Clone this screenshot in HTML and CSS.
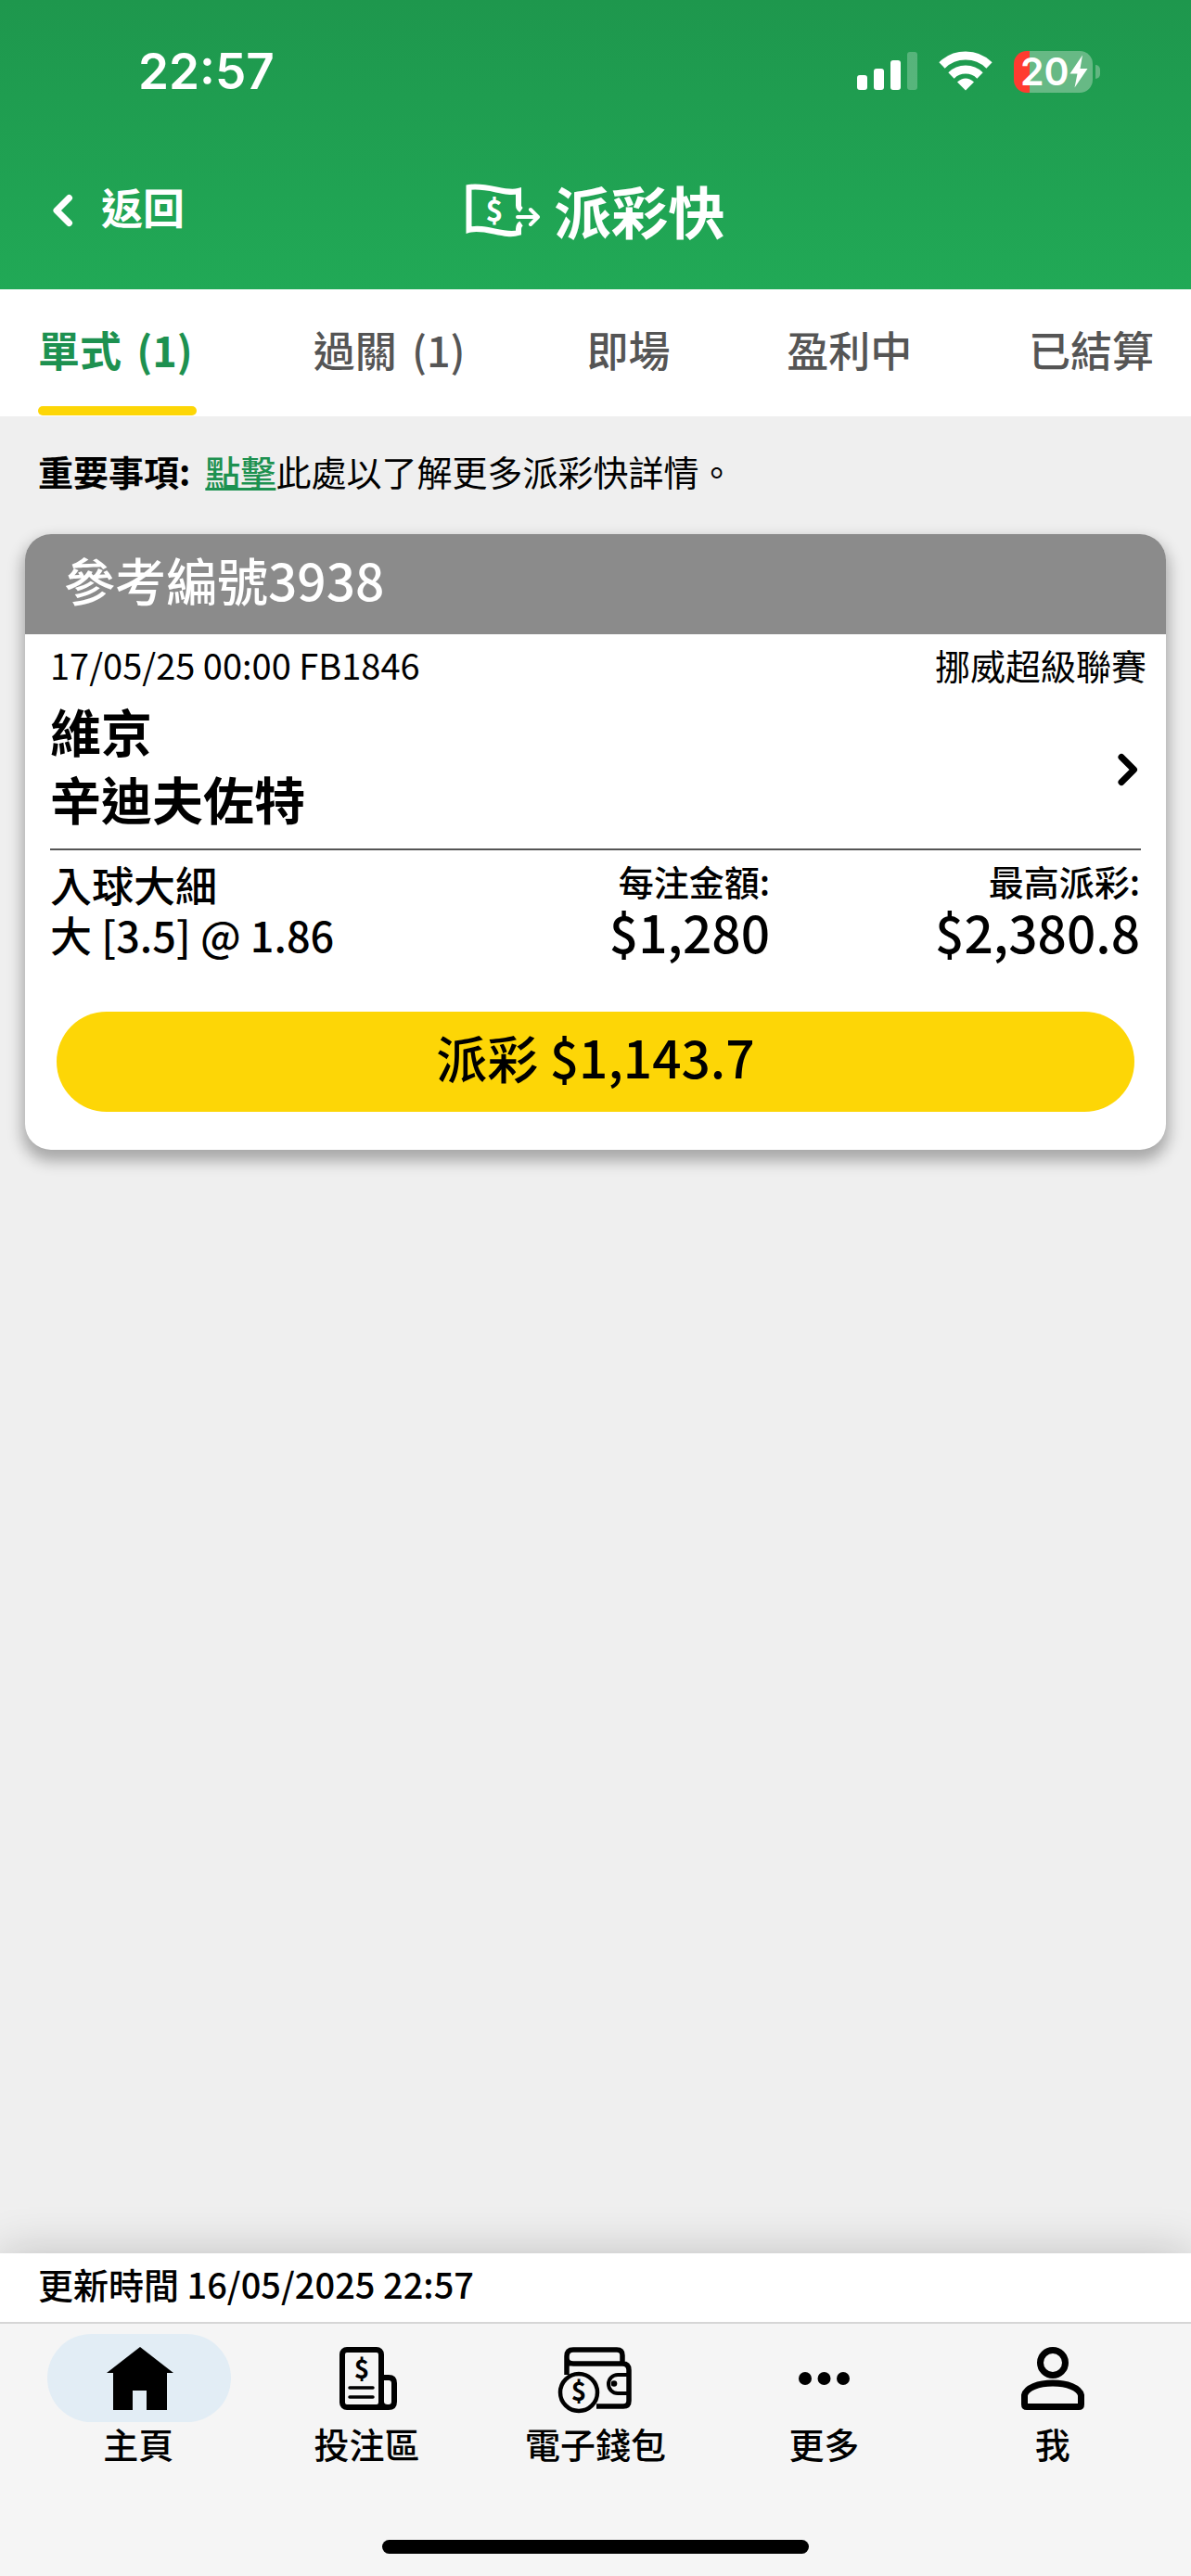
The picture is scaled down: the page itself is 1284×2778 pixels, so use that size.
FILE: index.html
```html
<!DOCTYPE html>
<html lang="zh-Hant-HK">
<head>
  <meta charset="UTF-8" />
  <meta name="viewport" content="width=device-width, initial-scale=1.0"/>
  <title>派彩快</title>
  <link rel="stylesheet" href="styles.css">
</head>
<body>
  <header class="header">
    <div class="status-bar">
      <span class="clock">22:57</span>
      <div class="status-icons">
        <svg class="signal" width="66" height="44" viewBox="0 0 66 44" fill="#fff">
          <rect x="0" y="26" width="11" height="16" rx="3"/>
          <rect x="18" y="19" width="11" height="23" rx="3"/>
          <rect x="36" y="10" width="11" height="32" rx="3"/>
          <rect x="54" y="1" width="11" height="41" rx="3" opacity="0.25"/>
        </svg>
        <svg class="wifi" width="58" height="44" viewBox="0 0 58 44" fill="none" stroke="#fff">
          <path d="M3.5 15.5a36.5 36.5 0 0 1 51 0" stroke-width="9"/>
          <path d="M13.5 26.500a22 22 0 0 1 31 0" stroke-width="9"/>
          <path d="M20 33.500q9-8 18 0L29 42.500z" fill="#fff" stroke="none"/>
        </svg>
        <div class="battery">
          <span class="battery-text">20</span>
          <svg width="20" height="36" viewBox="0 0 20 30" preserveAspectRatio="none" fill="#fff"><path d="M14 0.500L0.500 17h8L5.500 29.500 19.500 12.500h-8z"/></svg>
        </div>
        <div class="battery-cap"></div>
      </div>
    </div>
    <div class="nav-bar">
      <a class="back">
        <svg width="24" height="36" viewBox="0 0 24 36" fill="none" stroke="#fff" stroke-width="7" stroke-linecap="round" stroke-linejoin="round"><path d="M18.500 4.500L5 18l13.500 13.500"/></svg>
        <span>返回</span>
      </a>
      <h1 class="title">
        <svg width="80" height="58" viewBox="0 0 80 58" fill="none" stroke="#fff">
          <path d="M60 28.500q-3-2-3-5V8C42 12 25 1 3.500 4v46C20 45 42 58 57 53v-4q0-4 3-6" stroke-width="6"/>
          <path d="M56 36h21M70 28l8 8-8 8" stroke-width="4" stroke-linecap="round" stroke-linejoin="round"/>
          <text class="svg-dollar" x="31" y="41" font-size="32" fill="#fff" stroke="none">$</text>
        </svg>
        <span>派彩快</span>
      </h1>
    </div>
  </header>

  <nav class="tabs">
    <a class="tab count active">單式 (1)</a>
    <a class="tab count">過關 (1)</a>
    <a class="tab">即場</a>
    <a class="tab">盈利中</a>
    <a class="tab">已結算</a>
  </nav>

  <main class="content">
    <p class="notice"><b>重要事項:</b><span><a class="link">點擊</a>此處以了解更多派彩快詳情。</span></p>

    <section class="card">
      <div class="card-head">參考編號3938</div>
      <div class="card-body">
        <div class="match-info">
          <span>17/05/25 00:00 FB1846</span>
          <span class="league">挪威超級聯賽</span>
        </div>
        <div class="match">
          <div class="teams">
            <div>維京</div>
            <div>辛迪夫佐特</div>
          </div>
          <svg class="arrow" width="24" height="36" viewBox="0 0 24 36" fill="none" stroke="#000" stroke-width="7" stroke-linecap="round" stroke-linejoin="round"><path d="M5 4.500L18.500 18 5 31.500"/></svg>
        </div>
        <div class="bet">
          <div class="selection">
            <div>入球大細</div>
            <div>大 [3.5] @ 1.86</div>
          </div>
          <div class="amount">
            <div class="label">每注金額:</div>
            <div class="value">$1,280</div>
          </div>
          <div class="amount">
            <div class="label">最高派彩:</div>
            <div class="value">$2,380.8</div>
          </div>
        </div>
        <button class="cashout">派彩 $1,143.7</button>
      </div>
    </section>
  </main>

  <footer class="footer">
    <div class="updated">更新時間 16/05/2025 22:57</div>
    <nav class="bottom-nav">
      <a class="nav-item">
        <svg class="icon" viewBox="0 0 200 95">
          <rect x="2" y="0" width="198" height="95" rx="47.500" fill="#e2edf5"/>
          <path d="M102 14l36 28h-7v40h-22V61H94v21H73V42h-7z"/>
        </svg>
        <span>主頁</span>
      </a>
      <a class="nav-item">
        <svg class="icon" viewBox="0 0 200 95" fill="none" stroke="#000" stroke-width="6">
          <rect x="73" y="17" width="42" height="62" rx="5"/>
          <path d="M115 47h8q6 0 6 6v20q0 6-6 6h-14M115 47v26q0 6 7 6"/>
          <path d="M81 58h25M81 68h25" stroke-width="3.500" stroke-linecap="round"/>
          <text class="svg-dollar" x="94" y="48" font-size="28" fill="#000" stroke="none">$</text>
        </svg>
        <span>投注區</span>
      </a>
      <a class="nav-item">
        <svg class="icon" viewBox="0 0 200 95" fill="none" stroke="#000">
          <path d="M69 44V24q0-7 7-7h47q6 0 6 6v10M69 26q0 6 7 6h53q7 0 7 7v33q0 6-6 6h-29" stroke-width="5.500"/>
          <path d="M135 44h-11a10 10 0 0 0 0 20h11" stroke-width="4"/>
          <circle cx="120" cy="53.500" r="3.300" fill="#000" stroke="none"/>
          <circle cx="82" cy="63" r="20" stroke-width="4.500"/>
          <text class="svg-dollar" x="82" y="72" font-size="28" fill="#000" stroke="none">$</text>
        </svg>
        <span>電子錢包</span>
      </a>
      <a class="nav-item">
        <svg class="icon" viewBox="0 0 200 95"><circle cx="80" cy="48" r="7"/><circle cx="100.500" cy="48" r="7"/><circle cx="121" cy="48" r="7"/></svg>
        <span>更多</span>
      </a>
      <a class="nav-item">
        <svg class="icon" viewBox="0 0 200 95" fill="none" stroke="#000" stroke-width="7">
          <circle cx="100" cy="31" r="13.500"/>
          <path d="M69.500 66c2-8 15-13 30.500-13s28.500 5 30.500 13v10q0 2.500-2.500 2.500H72q-2.500 0-2.500-2.500z"/>
        </svg>
        <span>我</span>
      </a>
    </nav>
    <div class="home-indicator"></div>
  </footer>
</body>
</html>
```

FILE: styles.css
```css
* {
  box-sizing: border-box;
}

body {
  margin: 0;
  min-height: 2778px;
  display: flex;
  flex-direction: column;
  background-color: #efefef;
  color: #000;
  font-family: "Noto Sans CJK TC", "Noto Sans", sans-serif;
  font-size: 38px;
}

.header {
  height: 312px;
  background: linear-gradient(#1e974d, #21a956);
  color: #fff;
}

.status-bar {
  height: 154px;
  padding: 0 98px 0 149px;
  display: flex;
  justify-content: space-between;
  align-items: center;
}

.clock {
  font-family: Inter, sans-serif;
  font-size: 53px;
  font-weight: 600;
}

.status-icons {
  display: flex;
  align-items: center;
}

.wifi {
  margin: 0 23px 0 22px;
}

.battery {
  width: 85px;
  height: 45px;
  padding-left: 7px;
  display: flex;
  align-items: center;
  border-radius: 14px;
  background: linear-gradient(90deg, #ff3b30 17px, #67b985 17px);
}

.battery-text {
  width: 53px;
  font-family: Inter, sans-serif;
  font-size: 41px;
  font-weight: 600;
  line-height: 45px;
}

.battery-cap {
  width: 5px;
  height: 15px;
  margin-left: 3px;
  border-radius: 0 5px 5px 0;
  background-color: #62b681;
}

.nav-bar {
  height: 158px;
  padding: 0 56px 12px;
  display: grid;
  grid-template-columns: 1fr auto 1fr;
  align-items: center;
}

.back {
  display: flex;
  align-items: center;
  gap: 29px;
  font-size: 45px;
  font-weight: 700;
  line-height: 60px;
}

.back span {
  margin-top: -8px;
}

.title {
  margin: 0;
  display: flex;
  align-items: center;
  gap: 15px;
  font-size: 61.5px;
  line-height: 80px;
}

.svg-dollar {
  font-weight: 700;
  text-anchor: middle;
}

.tabs {
  height: 137px;
  padding: 32px 40px 0 41px;
  display: flex;
  justify-content: space-between;
  background-color: #fff;
  color: #555;
  font-size: 45px;
  font-weight: 500;
  line-height: 65px;
}

.tab.count {
  padding-right: 5px;
  word-spacing: 6px;
}

.tab.active {
  padding-right: 0;
  color: #1d9150;
  font-weight: 700;
}

.tab.active::after {
  content: "";
  display: block;
  width: 171px;
  height: 10px;
  margin-top: 29px;
  border-radius: 5px;
  background-color: #fdd606;
}

.content {
  flex: 1;
  padding: 31px 27px 0;
}

.notice {
  margin: 0 0 40px;
  padding-left: 14px;
  display: flex;
  gap: 16px;
  line-height: 56px;
}

.link {
  color: #1d9150;
  font-weight: 500;
  text-decoration: underline;
}

.card {
  border-radius: 28px;
  background-color: #fff;
  box-shadow: 0 9px 16px 3px rgba(0, 0, 0, 0.3);
}

.card-head {
  height: 108px;
  padding-left: 42px;
  border-radius: 28px 28px 0 0;
  background-color: #8b8b8b;
  color: #fff;
  font-size: 55px;
  font-weight: 500;
  line-height: 96px;
}

.card-body {
  padding: 5px 27px 41px;
}

.match-info {
  display: flex;
  justify-content: space-between;
  line-height: 56px;
}

.league {
  margin-right: -6px;
}

.match {
  padding: 6px 2px 18px 0;
  display: flex;
  justify-content: space-between;
  align-items: center;
  border-bottom: 2px solid #555;
}

.arrow {
  margin-top: 12px;
}

.teams {
  font-size: 55px;
  font-weight: 700;
  line-height: 73px;
}

.bet {
  display: grid;
  grid-template-columns: 375px 401px 399px;
  font-weight: 500;
}

.selection {
  padding-top: 10px;
  font-size: 45px;
  line-height: 54px;
}

.amount {
  padding-top: 5px;
  text-align: right;
  line-height: 55px;
}

.value {
  font-size: 55px;
}

.cashout {
  display: block;
  width: 1162px;
  height: 108px;
  margin: 56px 0 0 7px;
  padding: 0 0 11px;
  border: none;
  border-radius: 54px;
  background-color: #fdd606;
  color: #000;
  font-family: inherit;
  font-size: 55px;
  font-weight: 500;
  line-height: 97px;
}

.footer {
  height: 348px;
  background-color: #f5f5f5;
  box-shadow: 0 0 48px rgba(0, 0, 0, 0.2);
}

.updated {
  height: 74px;
  padding-left: 41px;
  background-color: #fff;
  font-weight: 500;
  line-height: 65px;
}

.bottom-nav {
  padding: 11px 26px 0;
  display: flex;
  border-top: 2px solid #d6d6d6;
}

.nav-item {
  flex: 1;
  display: flex;
  flex-direction: column;
  align-items: center;
  font-weight: 500;
  line-height: 46px;
}

.icon {
  width: 200px;
  height: 95px;
}

.home-indicator {
  width: 460px;
  height: 15px;
  margin: 81px auto 0;
  border-radius: 8px;
  background-color: #000;
}
```
